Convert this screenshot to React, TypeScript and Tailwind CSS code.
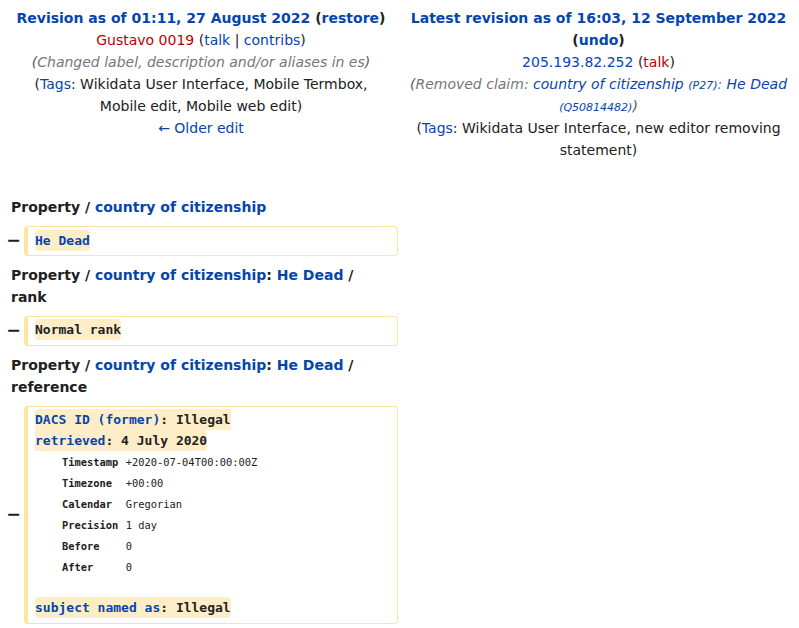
import React from 'react';

const link = 'text-[#0645ad]';
const redLink = 'text-[#ba0000]';

function Marker() {
  return (
    <div className="w-[24px] shrink-0 pr-[3px] text-right text-[17.5px] font-bold leading-none text-[#202122]">−</div>
  );
}

function DelBox({ children }: { children: React.ReactNode }) {
  return (
    <div className="flex items-center">
      <Marker />
      <div className="w-[374px] rounded-[4px] border border-l-4 border-[#ffe49c] py-[3.5px] pl-[7px] pr-2 font-['DejaVu_Sans_Mono',monospace] text-[13px] leading-[20.8px] text-[#202122]">
        {children}
      </div>
    </div>
  );
}

function Change({ children }: { children: React.ReactNode }) {
  return <span className="rounded-[4px] bg-[#feeec8] py-[3px] font-bold">{children}</span>;
}

function Heading({ children }: { children: React.ReactNode }) {
  return <div className="my-[8px] px-[11px] font-bold">{children}</div>;
}

const refRows = [
  ['Timestamp', '+2020-07-04T00:00:00Z'],
  ['Timezone', '+00:00'],
  ['Calendar', 'Gregorian'],
  ['Precision', '1 day'],
  ['Before', '0'],
  ['After', '0'],
];

export default function App() {
  return (
    <div className="h-[628px] w-[799px] overflow-hidden bg-white font-['DejaVu_Sans',sans-serif] text-[14px] leading-[22px] text-[#202122]">
      <div className="flex pt-[7px]">
        <div className="w-[398px] shrink-0 pl-[15px] pr-[11px] text-center">
          <div className="font-bold">
            <span className={link}>Revision as of 01:11, 27 August 2022</span>{' '}
            (<span className={link}>restore</span>)
          </div>
          <div>
            <span className={redLink}>Gustavo 0019</span> (<span className={link}>talk</span> | <span className={link}>contribs</span>)
          </div>
          <div className="italic text-[#54595d]">
            (<span className="text-[#72777d]">Changed label, description and/or aliases in es</span>)
          </div>
          <div>
            (<span className={link}>Tags</span>: Wikidata User Interface, Mobile Termbox, Mobile edit, Mobile web edit)
          </div>
          <div className={link}>← Older edit</div>
        </div>
        <div className="flex-1 px-[9px] text-center">
          <div className="font-bold">
            <span className={link}>Latest revision as of 16:03, 12 September 2022</span>{' '}
            (<span className={link}>undo</span>)
          </div>
          <div>
            <span className={link}>205.193.82.252</span> (<span className={redLink}>talk</span>)
          </div>
          <div className="italic text-[#54595d]">
            (<span className="text-[#72777d]">Removed claim: </span>
            <span className={link}>country of citizenship</span>{' '}
            <span className={`${link} text-[11px] leading-none`}>(P27)</span>
            <span className="text-[#72777d]">: </span>
            <span className={link}>He Dead</span>{' '}
            <span className={`${link} text-[11px] leading-none`}>(Q50814482)</span>)
          </div>
          <div>
            (<span className={link}>Tags</span>: Wikidata User Interface, new editor removing statement)
          </div>
        </div>
      </div>

      <div className="w-[398px] pt-[27px]">
        <Heading>
          Property / <span className={link}>country of citizenship</span>
        </Heading>
        <DelBox>
          <Change>
            <span className={link}>He Dead</span>
          </Change>
        </DelBox>

        <Heading>
          Property / <span className={link}>country of citizenship</span>: <span className={link}>He Dead</span> / rank
        </Heading>
        <DelBox>
          <Change>Normal rank</Change>
        </DelBox>

        <Heading>
          Property / <span className={link}>country of citizenship</span>: <span className={link}>He Dead</span> / reference
        </Heading>
        <DelBox>
          <Change>
            <span className={link}>DACS ID (former)</span>: Illegal
            <br />
            <span className={link}>retrieved</span>: 4 July 2020
          </Change>
          <div className="ml-[27px] grid grid-cols-[auto_1fr] gap-x-[7.5px] text-[10.4px]">
            {refRows.map(([k, v]) => (
              <React.Fragment key={k}>
                <div className="flex h-[21px] items-center font-bold">{k}</div>
                <div className="flex h-[21px] items-center">{v}</div>
              </React.Fragment>
            ))}
          </div>
          <div className="h-[20.8px]" />
          <Change>
            <span className={link}>subject named as</span>: Illegal
          </Change>
        </DelBox>
      </div>
    </div>
  );
}
